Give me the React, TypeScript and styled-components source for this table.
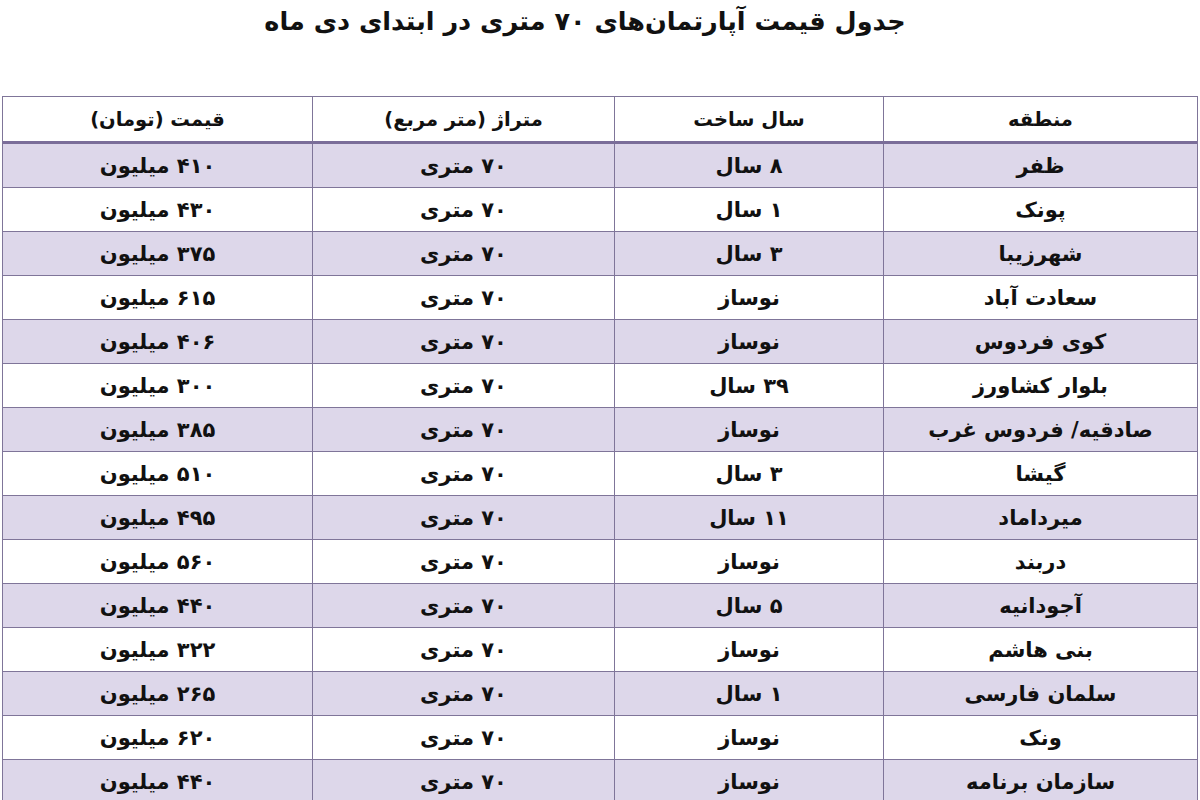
import styled, { createGlobalStyle } from "styled-components";

const GlobalStyle = createGlobalStyle`
  html, body {
    margin: 0;
    padding: 0;
    background: #ffffff;
  }
  body {
    font-family: "DejaVu Sans", "Noto Sans", sans-serif;
    color: #111111;
  }
`;

type Row = {
  region: string;
  age: string;
  size: string;
  price: string;
};

const rows: Row[] = [
  { region: "ظفر", age: "۸ سال", size: "۷۰ متری", price: "۴۱۰ میلیون" },
  { region: "پونک", age: "۱ سال", size: "۷۰ متری", price: "۴۳۰ میلیون" },
  { region: "شهرزیبا", age: "۳ سال", size: "۷۰ متری", price: "۳۷۵ میلیون" },
  { region: "سعادت آباد", age: "نوساز", size: "۷۰ متری", price: "۶۱۵ میلیون" },
  { region: "کوی فردوس", age: "نوساز", size: "۷۰ متری", price: "۴۰۶ میلیون" },
  { region: "بلوار کشاورز", age: "۳۹ سال", size: "۷۰ متری", price: "۳۰۰ میلیون" },
  { region: "صادقیه/ فردوس غرب", age: "نوساز", size: "۷۰ متری", price: "۳۸۵ میلیون" },
  { region: "گیشا", age: "۳ سال", size: "۷۰ متری", price: "۵۱۰ میلیون" },
  { region: "میرداماد", age: "۱۱ سال", size: "۷۰ متری", price: "۴۹۵ میلیون" },
  { region: "دربند", age: "نوساز", size: "۷۰ متری", price: "۵۶۰ میلیون" },
  { region: "آجودانیه", age: "۵ سال", size: "۷۰ متری", price: "۴۴۰ میلیون" },
  { region: "بنی هاشم", age: "نوساز", size: "۷۰ متری", price: "۳۲۲ میلیون" },
  { region: "سلمان فارسی", age: "۱ سال", size: "۷۰ متری", price: "۲۶۵ میلیون" },
  { region: "ونک", age: "نوساز", size: "۷۰ متری", price: "۶۲۰ میلیون" },
  { region: "سازمان برنامه", age: "نوساز", size: "۷۰ متری", price: "۴۴۰ میلیون" },
];

export default function App() {
  return (
    <>
      <GlobalStyle />
      <Page dir="rtl">
        <Title>جدول قیمت آپارتمان‌های ۷۰ متری در ابتدای دی ماه</Title>
        <PriceTable>
          <colgroup>
            <col style={{ width: 314 }} />
            <col style={{ width: 269 }} />
            <col style={{ width: 302 }} />
            <col />
          </colgroup>
          <thead>
            <tr>
              <HeadCell>منطقه</HeadCell>
              <HeadCell>سال ساخت</HeadCell>
              <HeadCell>متراژ (متر مربع)</HeadCell>
              <HeadCell>قیمت (تومان)</HeadCell>
            </tr>
          </thead>
          <tbody>
            {rows.map((row, i) => (
              <BodyRow key={row.region} $shaded={i % 2 === 0}>
                <Cell>{row.region}</Cell>
                <Cell>{row.age}</Cell>
                <Cell>{row.size}</Cell>
                <Cell>{row.price}</Cell>
              </BodyRow>
            ))}
          </tbody>
        </PriceTable>
      </Page>
    </>
  );
}

const Page = styled.div`
  width: 1200px;
  height: 800px;
  overflow: hidden;
  padding: 0 2px;
  box-sizing: border-box;
`;

const Title = styled.h1`
  margin: 0;
  padding-top: 4px;
  padding-right: 30px;
  height: 96px;
  box-sizing: border-box;
  text-align: center;
  font-size: 25.5px;
  font-weight: bold;
  line-height: 34px;
  color: #111111;
`;

const PriceTable = styled.table`
  width: 1196px;
  table-layout: fixed;
  border-collapse: separate;
  border-spacing: 0;
  border: 1px solid #7f7599;
  border-bottom: none;
`;

const HeadCell = styled.th`
  height: 44px;
  padding: 0;
  font-size: 19.5px;
  font-weight: bold;
  text-align: center;
  vertical-align: middle;
  background: #ffffff;
  border-bottom: 3px solid #7a6d99;

  &:not(:last-child) {
    border-left: 1px solid #7f7599;
  }
`;

const BodyRow = styled.tr<{ $shaded: boolean }>`
  background: ${(p) => (p.$shaded ? "#ddd7ea" : "#ffffff")};
`;

const Cell = styled.td`
  height: 43px;
  padding: 0;
  font-size: 21px;
  font-weight: bold;
  text-align: center;
  vertical-align: middle;
  border-bottom: 1px solid #7f7599;

  &:not(:last-child) {
    border-left: 1px solid #7f7599;
  }
`;
